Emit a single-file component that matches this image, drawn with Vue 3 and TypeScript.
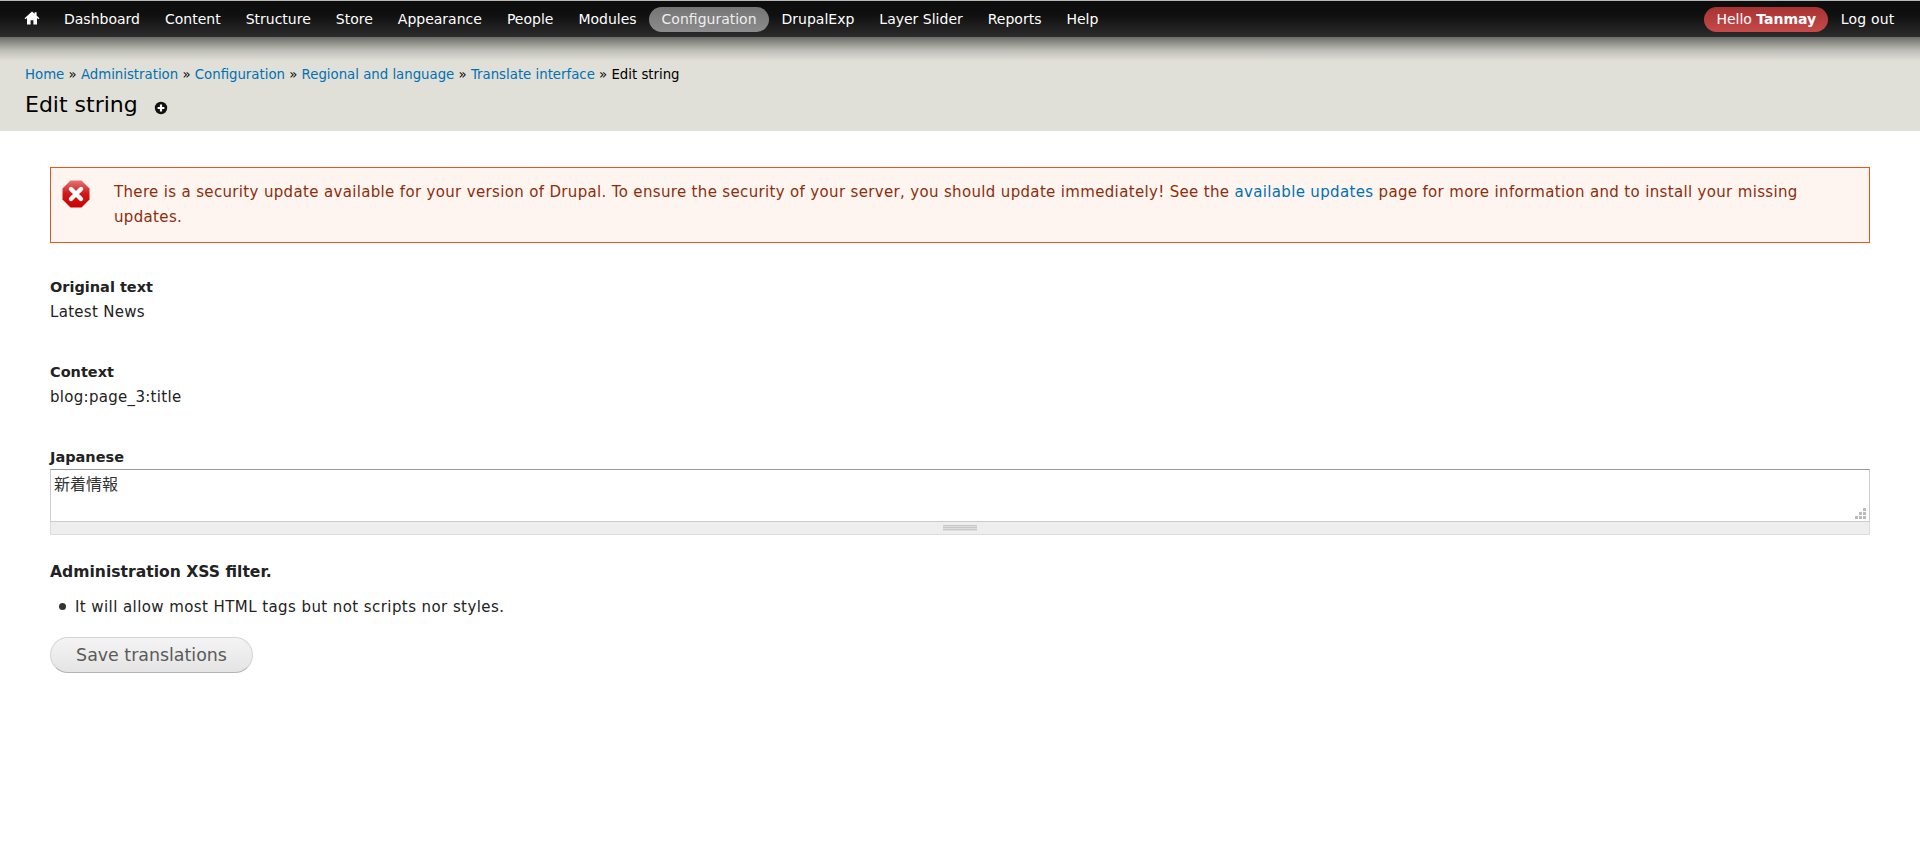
<script setup lang="ts">
const leftLinks: string[] = ['Dashboard', 'Content', 'Structure', 'Store', 'Appearance', 'People', 'Modules', 'Configuration', 'DrupalExp', 'Layer Slider', 'Reports', 'Help']
const crumbs: string[] = ['Home', 'Administration', 'Configuration', 'Regional and language', 'Translate interface']
</script>

<template>
  <div class="page">
    <header class="head">
      <nav class="toolbar">
        <a class="home" aria-label="Home">
          <svg width="16" height="14" viewBox="0 0 16 14"><path fill="#fff" d="M8 0.5 0.6 7.2 1.6 8.2 3 7V13.5H6.6V9.2H9.4V13.5H13V7L14.4 8.2 15.4 7.2 12.6 4.6V1.2H10.6V2.8Z"/></svg>
        </a>
        <ul class="menu">
          <li v-for="l in leftLinks" :key="l"><a :class="{ active: l === 'Configuration' }">{{ l }}</a></li>
        </ul>
        <div class="user">
          <a class="hello">Hello <strong>Tanmay</strong></a>
          <a class="logout">Log out</a>
        </div>
      </nav>
      <div class="shadow"></div>
      <div class="crumbs">
        <template v-for="c in crumbs" :key="c"><a>{{ c }}</a> » </template>Edit string
      </div>
      <h1 class="title">Edit string
        <svg class="plus" width="14" height="14" viewBox="0 0 14 14"><circle cx="7" cy="7" r="6.2" fill="#111"/><path d="M3.6 7H10.4M7 3.6V10.4" stroke="#fff" stroke-width="2.2"/></svg>
      </h1>
    </header>
    <main class="content">
      <div class="message">
        <svg class="err" width="28" height="28" viewBox="0 0 28 28">
          <defs><linearGradient id="eg" x1="0" y1="0" x2="0" y2="1"><stop offset="0" stop-color="#e57373"/><stop offset="0.5" stop-color="#d01818"/><stop offset="1" stop-color="#cc0000"/></linearGradient></defs>
          <path fill="url(#eg)" d="M8.5 0.5H19.5L27.5 8.5V19.5L19.5 27.5H8.5L0.5 19.5V8.5Z"/>
          <path d="M9 9 19 19M19 9 9 19" stroke="#fff" stroke-width="4.4" stroke-linecap="round"/>
        </svg>
        <p>There is a security update available for your version of Drupal. To ensure the security of your server, you should update immediately! See the <a>available updates</a> page for more information and to install your missing updates.</p>
      </div>
      <section class="item"><label>Original text</label><div>Latest News</div></section>
      <section class="item"><label>Context</label><div>blog:page_3:title</div></section>
      <section class="field">
        <label>Japanese</label>
        <div class="ta">新着情報
          <svg class="resize" width="12" height="12" viewBox="0 0 12 12"><path fill="#bbb" d="M9 1h3v3H9zM5 5h3v3H5zM9 5h3v3H9zM1 9h3v3H1zM5 9h3v3H5zM9 9h3v3H9z"/></svg>
        </div>
        <div class="grippie"><span></span></div>
      </section>
      <h2>Administration XSS filter.</h2>
      <ul class="tips"><li>It will allow most HTML tags but not scripts nor styles.</li></ul>
      <button class="save" type="button">Save translations</button>
    </main>
  </div>
</template>

<style>
html, body { margin: 0; background: #fff; }
</style>

<style scoped>
.page { font-family: "DejaVu Sans", sans-serif; font-size: 15px; letter-spacing: 0.3px; color: #222; height: 861px; overflow: hidden; }
.head { background: #e0e0d8; height: 131px; position: relative; letter-spacing: 0; }
.toolbar { height: 36px; border-top: 1px solid #b8b8b8; background: linear-gradient(#0c0c0c 0%, #101010 40%, #2c2c2c 100%); display: flex; align-items: center; padding: 0 13px 0 24px; font-size: 14px; position: relative; z-index: 1; }
.home { display: flex; width: 16px; margin-right: 11.5px; margin-top: -3px; }
.menu { display: flex; list-style: none; margin: 0; padding: 0; gap: 0; }
.menu a, .logout { color: #fff; display: block; padding: 0 12.5px; line-height: 25px; border-radius: 12.5px; }
.logout { letter-spacing: 0.2px; }
.menu a.active { background: linear-gradient(#757575, #8c8c8c); color: #eee; }
.user { margin-left: auto; display: flex; align-items: center; }
.hello { background: linear-gradient(#a83232, #c64a4a); color: #fff; line-height: 25px; padding: 0 12px; border-radius: 12.5px; }
.shadow { height: 24px; background: linear-gradient(#6c6c68, #bdbdb7 55%, #e0e0d8); }
.crumbs { padding: 4px 25px 0; font-size: 13.3px; line-height: 20px; color: #000; }
.crumbs a { color: #0071b3; }
.title { margin: 4px 25px 0; font-size: 22px; font-weight: 400; line-height: 32px; color: #000; }
.plus { margin-left: 9px; vertical-align: -3px; }
.content { padding: 36px 50px 0 50px; }
.message { height: 74px; border: 1px solid #ed541d; background: #fef5f1; color: #8c2e0b; display: flex; align-items: flex-start; padding: 0; }
.err { flex: none; margin: 12px 0 0 11px; }
.message p { margin: 12px 48px 0 24px; line-height: 25px; letter-spacing: 0.34px; }
.message a { color: #0071b3; }
.item { margin-top: 32px; line-height: 25px; }
.item + .item { margin-top: 35px; }
label { font-weight: 700; display: block; font-size: 14.5px; letter-spacing: 0; }
.field { margin-top: 36px; }
.field label { line-height: 22px; padding-bottom: 1px; }
.ta { height: 53px; box-sizing: border-box; border: 1px solid #ccc; border-top-color: #999; padding: 3px 3px 0; line-height: 20px; font-family: "Noto Sans CJK JP", sans-serif; font-size: 16px; letter-spacing: 0; color: #333; position: relative; }
.resize { position: absolute; right: 3px; bottom: 2px; }
.grippie { height: 12px; background: #eee; border: 1px solid #ddd; border-top: 0; display: flex; justify-content: center; align-items: center; }
.grippie span { width: 34px; height: 6px; background: repeating-linear-gradient(#c8c8c8 0 1px, #ddd 1px 2px); }
h2 { font-size: 15.6px; letter-spacing: 0; font-weight: 700; margin: 26px 0 0; line-height: 22px; }
.tips { margin: 12px 0 0; padding: 0 0 0 9px; line-height: 25px; list-style: none; letter-spacing: 0.42px; }
.tips li::before { content: ""; display: inline-block; width: 7px; height: 7px; border-radius: 50%; background: #333; margin-right: 9px; vertical-align: 2px; }
.save { display: block; margin-top: 17px; width: 203px; height: 36px; border: 1px solid #d4d4d4; border-bottom-color: #b4b4b4; border-radius: 18px; background: linear-gradient(#f4f4f4, #e4e4e4); color: #5a5a5a; font: 17.4px "DejaVu Sans", sans-serif; padding: 0; }
</style>
